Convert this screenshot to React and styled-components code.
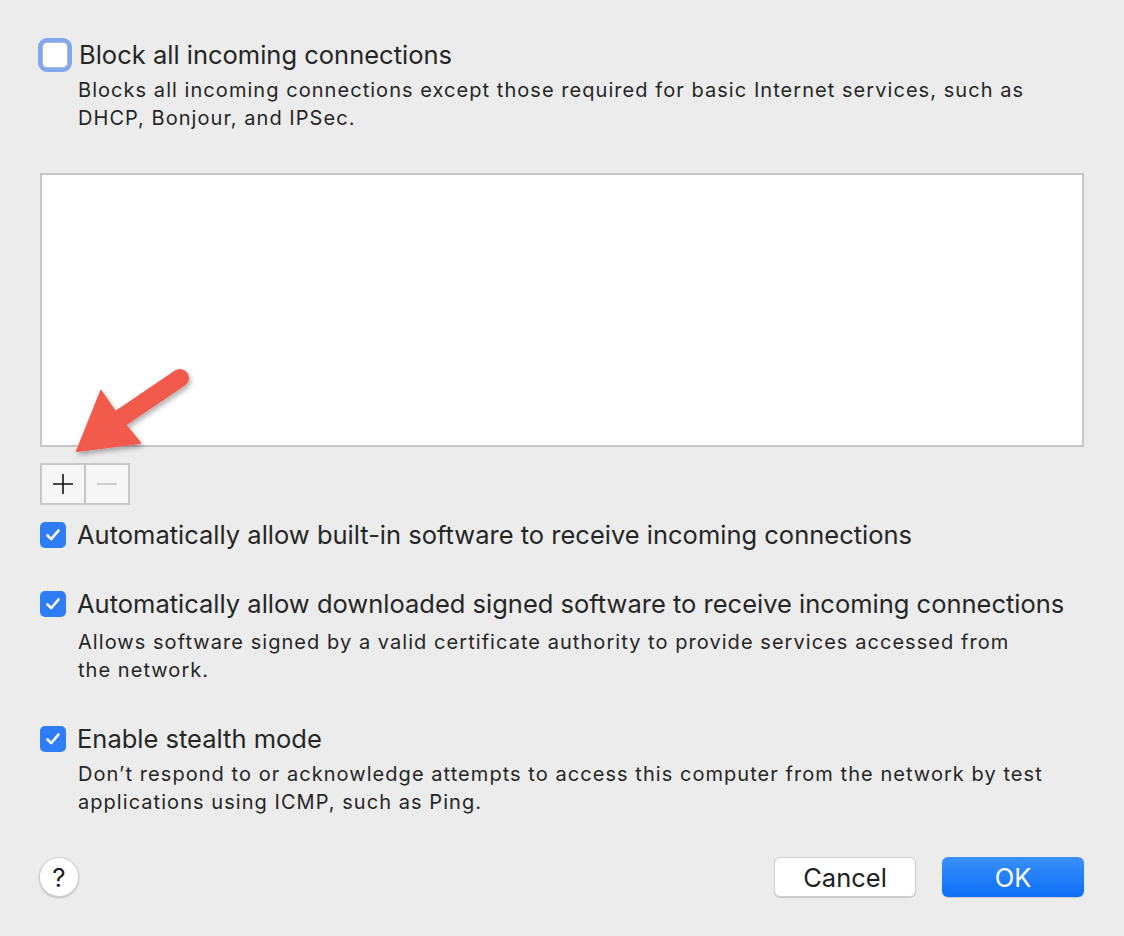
import React from "react";
import styled, { createGlobalStyle } from "styled-components";

const GlobalStyle = createGlobalStyle`
  html, body {
    margin: 0;
    padding: 0;
    background: #ececec;
  }
  body {
    font-family: Inter, "Liberation Sans", Arial, sans-serif;
    color: #262626;
  }
`;

const Window = styled.div`
  position: relative;
  width: 1124px;
  height: 936px;
  box-sizing: border-box;
  padding: 38px 40px 0 40px;
  background: #ececec;
  overflow: hidden;
`;

const Row = styled.div`
  display: flex;
  align-items: center;
  gap: 11px;
  height: 34px;
  margin-top: ${({ top }) => top || 0}px;
`;

const Box = styled.div`
  flex: none;
  width: 26px;
  height: 26px;
  box-sizing: border-box;
  border-radius: 5px;
  display: flex;
  align-items: center;
  justify-content: center;
  background: ${({ checked }) => (checked ? "#2f7df6" : "#fff")};
  border: ${({ checked }) => (checked ? "none" : "1px solid #a9b8d3")};
  box-shadow: ${({ focus }) => (focus ? "0 0 0 4px #81a8ec" : "none")};
  margin-left: ${({ focus }) => (focus ? 2 : 0)}px;
`;

const Label = styled.span`
  font-size: 25.5px;
  line-height: 34px;
  white-space: nowrap;
`;

const Desc = styled.p`
  margin: ${({ top }) => top || 0}px 0 0 38px;
  font-size: 20px;
  letter-spacing: 1.05px;
  line-height: 28px;
  white-space: nowrap;
`;

const List = styled.div`
  margin-top: 41px;
  height: 274px;
  box-sizing: border-box;
  background: #fff;
  border: 2px solid #c6c6c6;
`;

const ButtonGroup = styled.div`
  display: flex;
  margin-top: 16px;
  width: 90px;
  height: 42px;
  box-sizing: border-box;
  border: 2px solid #c8c8c8;
  background: #f6f6f6;
`;

const SegButton = styled.div`
  flex: 1;
  display: flex;
  align-items: center;
  justify-content: center;
  border-left: ${({ divider }) => (divider ? "2px solid #c8c8c8" : "none")};
`;

const Footer = styled.div`
  display: flex;
  align-items: center;
  margin-top: 41px;
  margin-left: -1px;
`;

const Help = styled.div`
  width: 40px;
  height: 40px;
  box-sizing: border-box;
  border-radius: 50%;
  background: #fff;
  border: 1px solid #cfcfcf;
  box-shadow: 0 1px 2px rgba(0, 0, 0, 0.2);
  display: flex;
  align-items: center;
  justify-content: center;
  font-size: 26px;
  color: #1e1e1e;
`;

const Spacer = styled.div`
  flex: 1;
`;

const Button = styled.div`
  width: 142px;
  height: 40px;
  box-sizing: border-box;
  border-radius: 6px;
  display: flex;
  align-items: center;
  justify-content: center;
  font-size: 25.5px;
  margin-left: ${({ gap }) => gap || 0}px;
  ${({ primary }) =>
    primary
      ? `
    color: #fff;
    background: linear-gradient(180deg, #3a91fb 0%, #0d6ef6 100%);
    box-shadow: 0 1px 1px rgba(0,0,0,0.15);
  `
      : `
    color: #1f1f1f;
    background: #fff;
    border: 1px solid #cdcdcd;
    box-shadow: 0 1px 1px rgba(0,0,0,0.15);
  `}
`;

const ArrowLayer = styled.svg`
  position: absolute;
  left: 0;
  top: 0;
  pointer-events: none;
`;

const Check = () => (
  <svg width="18" height="18" viewBox="0 0 18 18">
    <path
      d="M3.5 9.5 L7.2 13.2 L14.5 4.5"
      fill="none"
      stroke="#fff"
      strokeWidth="2.6"
      strokeLinecap="round"
      strokeLinejoin="round"
    />
  </svg>
);

const CheckRow = ({ checked, focus, top, children }) => (
  <Row top={top}>
    <Box checked={checked} focus={focus}>
      {checked && <Check />}
    </Box>
    <Label>{children}</Label>
  </Row>
);

export default function App() {
  return (
    <>
      <GlobalStyle />
      <Window>
        <CheckRow focus>Block all incoming connections</CheckRow>
        <Desc top={4}>
          Blocks all incoming connections except those required for basic Internet services, such as
          <br />
          DHCP, Bonjour, and IPSec.
        </Desc>

        <List />

        <ButtonGroup>
          <SegButton>
            <svg width="22" height="22" viewBox="0 0 22 22">
              <path d="M11 1 V21 M1 11 H21" stroke="#111" strokeWidth="1.6" />
            </svg>
          </SegButton>
          <SegButton divider>
            <svg width="22" height="22" viewBox="0 0 22 22">
              <path d="M1 11 H21" stroke="#c4c4c4" strokeWidth="1.6" />
            </svg>
          </SegButton>
        </ButtonGroup>

        <CheckRow checked top={13}>
          Automatically allow built-in software to receive incoming connections
        </CheckRow>

        <CheckRow checked top={35}>
          Automatically allow downloaded signed software to receive incoming connections
        </CheckRow>
        <Desc top={7}>
          Allows software signed by a valid certificate authority to provide services accessed from
          <br />
          the network.
        </Desc>

        <CheckRow checked top={38}>
          Enable stealth mode
        </CheckRow>
        <Desc top={4}>
          Don’t respond to or acknowledge attempts to access this computer from the network by test
          <br />
          applications using ICMP, such as Ping.
        </Desc>

        <Footer>
          <Help>?</Help>
          <Spacer />
          <Button>Cancel</Button>
          <Button primary gap={26}>
            OK
          </Button>
        </Footer>

        <ArrowLayer width="1124" height="936" viewBox="0 0 1124 936">
          <defs>
            <filter id="shadow" x="-20%" y="-20%" width="140%" height="140%">
              <feDropShadow dx="2" dy="3" stdDeviation="2.5" floodColor="#000" floodOpacity="0.3" />
            </filter>
          </defs>
          <g filter="url(#shadow)">
            <line x1="180" y1="378" x2="118" y2="420" stroke="#f25a4c" strokeWidth="18" strokeLinecap="round" />
            <path d="M77 451 L101 391 L118 416 L140 443 Z" fill="#f25a4c" stroke="#f25a4c" strokeWidth="2" strokeLinejoin="round" />
          </g>
        </ArrowLayer>
      </Window>
    </>
  );
}
